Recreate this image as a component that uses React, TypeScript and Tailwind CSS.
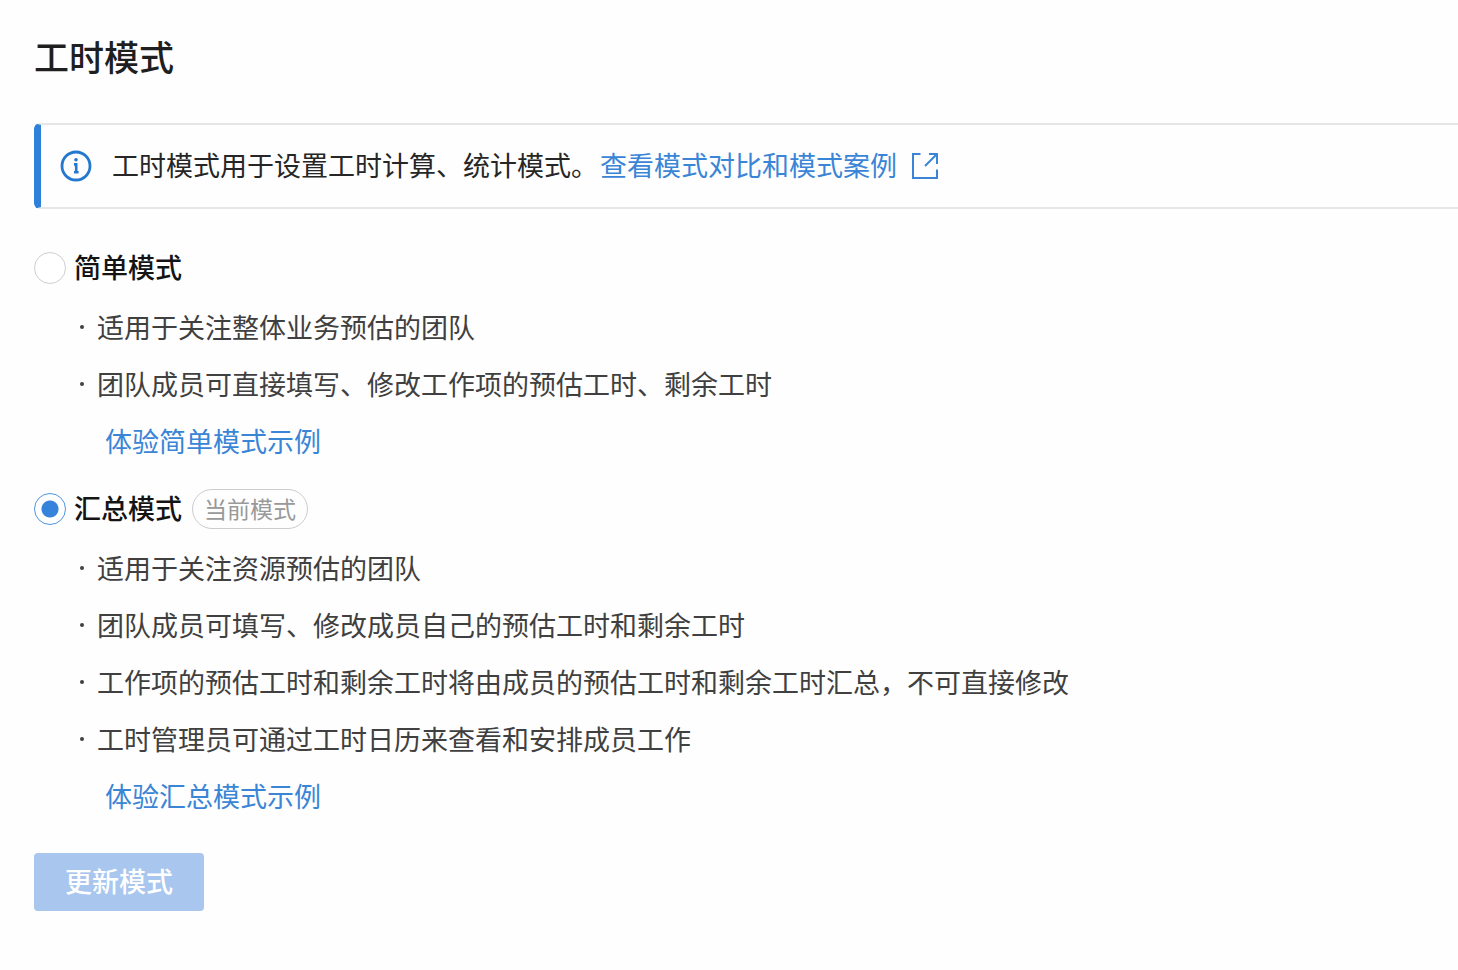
import { useState } from "react";

interface Mode {
    id: string;
    name: string;
    points: string[];
    example: string;
}

const CURRENT_MODE = "summary";

const modes: Mode[] = [
    {
        id: "simple",
        name: "简单模式",
        points: [
            "适用于关注整体业务预估的团队",
            "团队成员可直接填写、修改工作项的预估工时、剩余工时",
        ],
        example: "体验简单模式示例",
    },
    {
        id: "summary",
        name: "汇总模式",
        points: [
            "适用于关注资源预估的团队",
            "团队成员可填写、修改成员自己的预估工时和剩余工时",
            "工作项的预估工时和剩余工时将由成员的预估工时和剩余工时汇总，不可直接修改",
            "工时管理员可通过工时日历来查看和安排成员工作",
        ],
        example: "体验汇总模式示例",
    },
];

function InfoIcon() {
    return (
        <svg className="w-8 h-8 shrink-0" viewBox="0 0 32 32" fill="none" aria-hidden="true">
            <circle cx="16" cy="16" r="14" stroke="#2378cf" strokeWidth="2.8" />
            <circle cx="16" cy="9.8" r="1.8" fill="#2378cf" />
            <path d="M14 14.4h2.2v7.6M14 22.2h4.6" stroke="#2378cf" strokeWidth="2.6" />
        </svg>
    );
}

function ExternalIcon() {
    return (
        <svg className="w-7 h-7 shrink-0" viewBox="0 0 28 28" fill="none" stroke="#3a85d6" strokeWidth="2" aria-hidden="true">
            <path d="M9.5 2H2v24h24v-8.5" />
            <path d="M18 2h8v10M26 2L14 14" />
        </svg>
    );
}

function ModeSection({
    mode,
    checked,
    onSelect,
}: {
    mode: Mode;
    checked: boolean;
    onSelect: (id: string) => void;
}) {
    return (
        <section>
            <div className="flex h-10 items-center">
                <input
                    type="radio"
                    name="mode"
                    id={mode.id}
                    checked={checked}
                    onChange={() => onSelect(mode.id)}
                    className="size-8 shrink-0 appearance-none rounded-full border border-[#cfcfcf] bg-white checked:border-[#4f95df] checked:bg-[radial-gradient(circle,#3583da_8px,white_9px)]"
                />
                <label htmlFor={mode.id} className="ml-2 pb-0.5 font-medium text-[#141414]">
                    {mode.name}
                </label>
                {mode.id === CURRENT_MODE && (
                    <span className="ml-2.5 flex h-10 items-center rounded-full border border-[#cccccc] px-[11px] pb-0.5 text-[23px] text-[#999999]">
                        当前模式
                    </span>
                )}
            </div>

            <ul className="mt-[10px] pl-[42px] leading-[57px] text-[#404040]">
                {mode.points.map((point) => (
                    <li key={point} className="flex">
                        <span className="flex w-[21px] shrink-0 items-center pl-1" aria-hidden="true">
                            <span className="size-1 rounded-full bg-[#404040]" />
                        </span>
                        {point}
                    </li>
                ))}
            </ul>
            <a href="#" className="ml-[71px] inline-block leading-[57px] text-[#3a85d6]">
                {mode.example}
            </a>
        </section>
    );
}

export default function App() {
    const [selected, setSelected] = useState(CURRENT_MODE);

    return (
        <main className="min-h-screen bg-[#fefefe] pt-[31px] pb-12 pl-[34px] font-['Noto_Sans_CJK_SC',sans-serif] text-[27px] leading-10">
            <h1 className="text-[35px] leading-[50px] font-medium text-[#1f1f1f]">工时模式</h1>

            <div className="mt-[42px] flex h-[86px] items-center rounded-l-md border-y-2 border-l-7 border-y-[#e6e6e6] border-l-[#2f80d8] pl-[19px]">
                <InfoIcon />
                <p className="ml-5 pb-0.5 text-[#262626]">工时模式用于设置工时计算、统计模式。</p>
                <a href="#" className="ml-0.5 flex items-center gap-3.5 text-[#3a85d6]">
                    <span className="pb-0.5">查看模式对比和模式案例</span>
                    <ExternalIcon />
                </a>
            </div>

            <form className="mt-[39px]" onSubmit={(e) => e.preventDefault()}>
                <div className="flex flex-col gap-5">
                    {modes.map((mode) => (
                        <ModeSection
                            key={mode.id}
                            mode={mode}
                            checked={selected === mode.id}
                            onSelect={setSelected}
                        />
                    ))}
                </div>

                <button
                    type="submit"
                    disabled={selected === CURRENT_MODE}
                    className="mt-[29px] h-[58px] rounded bg-[#2f80d8] px-[31px] pb-0.5 font-medium text-white disabled:bg-[#a9c6ee]"
                >
                    更新模式
                </button>
            </form>
        </main>
    );
}
